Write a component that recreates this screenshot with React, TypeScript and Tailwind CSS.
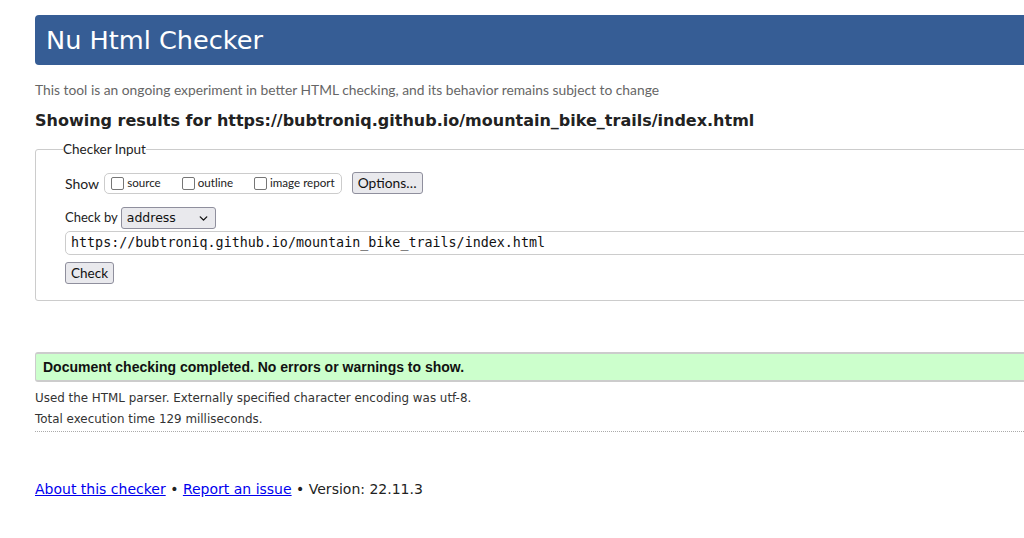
import { ChevronDown } from 'lucide-react';

const fira = "font-['Lato','Noto_Sans',sans-serif]";
const dejavu = "font-['DejaVu_Sans',sans-serif]";

const Box = ({ label }: { label: string }) => (
  <label className="flex items-center gap-[3px] mr-[21px] last:mr-0">
    <span className="w-[13px] h-[13px] border border-[#767676] rounded-[2px] bg-white" />
    <span className="text-[11.6px] text-[#222]">{label}</span>
  </label>
);

export default function App() {
  return (
    <div className="w-[1024px] min-h-[538px] overflow-hidden bg-white">
      <div className="w-[1100px] pl-[35px] pt-[15px]">
        {/* Title bar */}
        <h1 className={`${dejavu} h-[50px] flex items-center pl-[11px] bg-[#365d95] text-white text-[25.6px] rounded-[4px]`}>
          Nu Html Checker
        </h1>

        <p className={`${fira} mt-[15px] text-[13.8px] text-[#666]`}>
          This tool is an ongoing experiment in better HTML checking, and its behavior remains subject to change
        </p>

        <h2 className={`${dejavu} mt-[8px] font-bold text-[16px] text-[#222]`}>
          Showing results for https://bubtroniq.github.io/mountain_bike_trails/index.html
        </h2>

        {/* Checker input */}
        <fieldset className={`${fira} mt-[10px] border border-[#ccc] rounded-l-[3px] pl-[29px] pb-[16px] pt-[16px]`}>
          <legend className="text-[13.5px] text-[#222] ml-[-2px] leading-none">Checker Input</legend>
          <div className="flex items-center h-[22px]">
            <span className="text-[14px] text-[#222] mr-[5px]">Show</span>
            <div className="flex items-center h-[21px] border border-[#ccc] rounded-[5px] pl-[6px] pr-[6px]">
              <Box label="source" />
              <Box label="outline" />
              <Box label="image report" />
            </div>
            <button className="ml-[10px] h-[22px] px-[5px] text-[13.8px] text-[#111] bg-[#e9e9ed] border border-[#8f8f9d] rounded-[3px]">
              Options…
            </button>
          </div>

          <div className="flex items-center mt-[13px] h-[22px]">
            <span className="text-[13px] text-[#222] mr-[3px]">Check by</span>
            <div className={`${dejavu} flex items-center justify-between w-[95px] h-[22px] pl-[5px] pr-[5px] text-[12.5px] text-[#111] bg-[#e9e9ed] border border-[#8f8f9d] rounded-[3px]`}>
              address
              <ChevronDown className="w-[13px] h-[13px]" strokeWidth={2.5} />
            </div>
          </div>

          <div className="mt-[2px] h-[24px] flex items-center pl-[5px] border border-[#ccc] rounded-l-[5px] font-['DejaVu_Sans_Mono',monospace] text-[13.35px] text-[#111]">
            https://bubtroniq.github.io/mountain_bike_trails/index.html
          </div>

          <button className="mt-[7px] h-[22px] px-[5px] text-[13.5px] text-[#111] bg-[#e9e9ed] border border-[#8f8f9d] rounded-[3px] flex items-center">
            Check
          </button>
        </fieldset>

        {/* Result */}
        <div className="mt-[51px] h-[30px] flex items-center pl-[7px] bg-[#ccffcc] border-y-2 border-l border-[#ccc] rounded-l-[3px] font-['Liberation_Sans',Arial,sans-serif] font-bold text-[14px] text-[#111]">
          Document checking completed. No errors or warnings to show.
        </div>

        <div className={`${dejavu} text-[11.9px] text-[#333] border-b border-dotted border-[#aaa] pb-[2px]`}>
          <p className="mt-[6px] leading-[20px]">Used the HTML parser. Externally specified character encoding was utf-8.</p>
          <p className="mt-[1px] leading-[20px]">Total execution time 129 milliseconds.</p>
        </div>

        <p className={`${dejavu} mt-[47px] text-[14px] text-[#222]`}>
          <a href="#" className="text-[#0000ee] underline">About this checker</a>
          {' • '}
          <a href="#" className="text-[#0000ee] underline">Report an issue</a>
          {' • Version: 22.11.3'}
        </p>
      </div>
    </div>
  );
}
